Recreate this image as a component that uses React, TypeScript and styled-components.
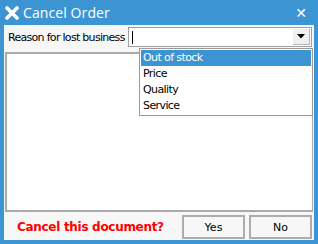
import styled, { createGlobalStyle } from 'styled-components';

const Global = createGlobalStyle`
  html, body {
    margin: 0;
    padding: 0;
    background: #ffffff;
  }
  body {
    font-family: Tahoma, "DejaVu Sans", sans-serif;
  }
`;

const Window = styled.div`
  width: 318px;
  height: 244px;
  box-sizing: border-box;
  background: #3c95d2;
  padding: 0 4px 4px 4px;
  display: flex;
  flex-direction: column;
`;

const TitleBar = styled.div`
  height: 25px;
  display: flex;
  align-items: center;
  color: #ffffff;
  font-family: "Open Sans", "DejaVu Sans", sans-serif;
  font-size: 14px;
  gap: 4px;
  padding-left: 1px;
`;

const TitleText = styled.span`
  flex: 1;
  letter-spacing: 0.1px;
`;

const CloseGlyph = styled.span`
  width: 22px;
  font-family: "DejaVu Sans", sans-serif;
  font-size: 14px;
  text-align: center;
  margin-right: 2px;
`;

const Body = styled.div`
  flex: 1;
  background: #f7f7f7;
  position: relative;
  display: flex;
  flex-direction: column;
  padding: 2px 1px 0 1px;
`;

const FieldRow = styled.div`
  display: flex;
  align-items: center;
  height: 20px;
  gap: 3px;
  padding-left: 3px;
`;

const Label = styled.label`
  font-family: "DejaVu Sans", sans-serif;
  font-size: 11px;
  letter-spacing: -0.7px;
  color: #000;
  white-space: nowrap;
`;

const Combo = styled.div`
  flex: 1;
  height: 20px;
  box-sizing: border-box;
  border: 1px solid #a0a0a0;
  background: #ffffff;
  display: flex;
  align-items: stretch;
  margin-right: 1px;
`;

const ComboText = styled.div`
  flex: 1;
  display: flex;
  align-items: center;
  padding-left: 3px;
`;

const Caret = styled.span`
  width: 1px;
  height: 13px;
  background: #000;
`;

const ArrowButton = styled.div`
  width: 16px;
  margin: 1px;
  background: #f0f0f0;
  border-right: 1px solid #b4b4b4;
  border-bottom: 1px solid #b4b4b4;
  display: flex;
  align-items: center;
  justify-content: center;
`;

const Panel = styled.div`
  margin-top: 5px;
  height: 160px;
  box-sizing: border-box;
  background: #ffffff;
  border: 2px solid #aaaaaa;
  border-width: 2px 1px 2px 2px;
`;

const Footer = styled.div`
  display: flex;
  align-items: center;
  padding: 3px 1px 0 12px;
  gap: 4px;
`;

const Question = styled.span`
  flex: 1;
  color: #ff0000;
  font-family: "DejaVu Sans", sans-serif;
  font-weight: bold;
  font-size: 12px;
  letter-spacing: -0.3px;
`;

const DialogButton = styled.button`
  width: 63px;
  height: 24px;
  box-sizing: border-box;
  border: 2px solid #adadad;
  background: #f7f7f7;
  font-family: "DejaVu Sans", sans-serif;
  font-size: 11px;
  color: #000;
  padding: 0;
`;

const DropList = styled.ul`
  position: absolute;
  left: 135px;
  top: 23px;
  width: 174px;
  box-sizing: border-box;
  margin: 0;
  padding: 1px;
  list-style: none;
  background: #ffffff;
  border: 1px solid #9a9a9a;
`;

const DropItem = styled.li<{ $active?: boolean }>`
  height: 16px;
  line-height: 16px;
  padding-left: 2px;
  font-family: "DejaVu Sans", sans-serif;
  font-size: 11px;
  letter-spacing: -0.6px;
  background: ${(p) => (p.$active ? '#3c95d2' : 'transparent')};
  color: ${(p) => (p.$active ? '#ffffff' : '#000000')};
`;

const reasons = ['Out of stock', 'Price', 'Quality', 'Service'];

const App = () => {
  return (
    <>
      <Global />
      <Window>
        <TitleBar>
          <svg width="14" height="14" viewBox="0 0 14 14">
            <path d="M2 2 L12 12 M12 2 L2 12" stroke="#ffffff" strokeWidth="3.6" strokeLinecap="round" />
          </svg>
          <TitleText>Cancel Order</TitleText>
          <CloseGlyph>✕</CloseGlyph>
        </TitleBar>
        <Body>
          <FieldRow>
            <Label htmlFor="reason">Reason for lost business</Label>
            <Combo id="reason">
              <ComboText>
                <Caret />
              </ComboText>
              <ArrowButton>
                <svg width="8" height="5" viewBox="0 0 8 5">
                  <path d="M0 0 H8 L4 4.5 Z" fill="#000" />
                </svg>
              </ArrowButton>
            </Combo>
          </FieldRow>
          <Panel />
          <Footer>
            <Question>Cancel this document?</Question>
            <DialogButton>Yes</DialogButton>
            <DialogButton>No</DialogButton>
          </Footer>
          <DropList>
            {reasons.map((r, i) => (
              <DropItem key={r} $active={i === 0}>
                {r}
              </DropItem>
            ))}
          </DropList>
        </Body>
      </Window>
    </>
  );
};

export default App;
